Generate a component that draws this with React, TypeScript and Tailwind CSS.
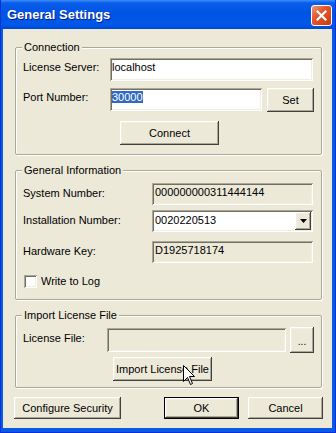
import React from "react";

const raised =
  "bg-[#ECE9D8] shadow-[inset_-1px_-1px_0_#404040,inset_1px_1px_0_#ffffff,inset_-2px_-2px_0_#ACA899,inset_2px_2px_0_#F1EFE2]";
const sunken =
  "shadow-[inset_1px_1px_0_#ACA899,inset_-1px_-1px_0_#ffffff,inset_2px_2px_0_#716F64,inset_-2px_-2px_0_#F1EFE2]";

function Group({
  title,
  className,
  children,
}: {
  title: string;
  className: string;
  children: React.ReactNode;
}) {
  return (
    <div
      className={`relative w-[307px] shrink-0 border border-[#ACA899] rounded-[2px] shadow-[inset_1px_1px_0_#ffffff,1px_1px_0_#ffffff] ${className}`}
    >
      <span className="absolute left-[6px] top-[-7px] px-[2px] bg-[#ECE9D8] leading-[13px] whitespace-nowrap">
        {title}
      </span>
      {children}
    </div>
  );
}

function Btn({
  children,
  className,
}: {
  children: React.ReactNode;
  className: string;
}) {
  return (
    <div
      className={`${raised} flex items-center justify-center shrink-0 leading-[13px] whitespace-nowrap ${className}`}
    >
      {children}
    </div>
  );
}

export default function App() {
  return (
    <div className="relative w-[336px] h-[433px] flex flex-col bg-[#0A5AE6] border-x border-b border-[#0831D9] font-['Liberation_Sans',Arial,sans-serif] text-[11px] leading-[13px] text-black overflow-hidden select-none">
      {/* Title bar */}
      <div className="h-[29px] shrink-0 -mx-px flex items-start justify-between pl-[7px] pr-[4px] bg-[linear-gradient(180deg,#3D8EF8_0%,#0A5EEB_10%,#0054E3_45%,#0058E9_85%,#0048D6_100%)]">
        <span className="mt-[7px] text-[13px] leading-[15px] font-bold text-white [text-shadow:1px_1px_0_#0A1E8C]">
          General Settings
        </span>
        <div className="mt-[5px] w-[21px] h-[21px] rounded-[3px] border border-white bg-[linear-gradient(135deg,#F09A78_0%,#E2562F_40%,#CC3A12_100%)] flex items-center justify-center">
          <svg width="11" height="11" viewBox="0 0 11 11">
            <path
              d="M1.5 1.5 L9.5 9.5 M9.5 1.5 L1.5 9.5"
              stroke="#ffffff"
              strokeWidth="2.2"
              strokeLinecap="square"
            />
          </svg>
        </div>
      </div>

      {/* Frame + client */}
      <div className="flex-1 flex pl-[2px] pr-[3px] pb-[4px]">
        <div className="flex-1 bg-[#ECE9D8] flex flex-col pl-[12px] pt-[18px]">
          {/* Connection */}
          <Group title="Connection" className="h-[108px] pt-[10px] pl-[7px]">
            <div className="flex items-start h-[23px]">
              <span className="w-[87px] mt-[3px]">License Server:</span>
              <div className={`w-[203px] h-[23px] bg-white ${sunken} pl-[2px] pt-[3px]`}>
                localhost
              </div>
            </div>
            <div className="flex items-start mt-[7px]">
              <span className="w-[87px] mt-[3px]">Port Number:</span>
              <div className={`w-[152px] h-[23px] bg-white ${sunken} pl-[2px] pt-[3px]`}>
                <span className="bg-[#316AC5] text-white">30000</span>
              </div>
              <Btn className="ml-[5px] w-[47px] h-[24px]">Set</Btn>
            </div>
            <Btn className="mt-[9px] ml-[97px] w-[99px] h-[24px]">Connect</Btn>
          </Group>

          {/* General Information */}
          <Group title="General Information" className="mt-[15px] h-[130px] pt-[12px] pl-[7px]">
            <div className="flex items-start h-[22px]">
              <span className="w-[129px] mt-[4px]">System Number:</span>
              <div className={`w-[161px] h-[22px] ${sunken} pl-[3px] pt-[3px]`}>
                000000000311444144
              </div>
            </div>
            <div className="flex items-start h-[22px] mt-[5px]">
              <span className="w-[129px] mt-[4px]">Installation Number:</span>
              <div className={`w-[161px] h-[22px] bg-white ${sunken} pl-[3px] pt-[2px] pr-[2px] flex items-start justify-between`}>
                <span className="mt-[2px]">0020220513</span>
                <div className={`${raised} w-[16px] h-[18px] flex items-center justify-center`}>
                  <svg width="7" height="4" viewBox="0 0 7 4">
                    <path d="M0 0 H7 L3.5 4 Z" fill="#000000" />
                  </svg>
                </div>
              </div>
            </div>
            <div className="flex items-start h-[22px] mt-[9px]">
              <span className="w-[129px] mt-[4px]">Hardware Key:</span>
              <div className={`w-[161px] h-[22px] ${sunken} pl-[3px] pt-[3px]`}>
                D1925718174
              </div>
            </div>
            <div className="flex items-center mt-[12px] ml-[1px]">
              <div className={`w-[13px] h-[13px] bg-white ${sunken}`} />
              <span className="ml-[4px]">Write to Log</span>
            </div>
          </Group>

          {/* Import License File */}
          <Group title="Import License File" className="mt-[15px] h-[73px] pt-[11px] pl-[7px]">
            <div className="flex items-start">
              <span className="w-[84px] mt-[5px]">License File:</span>
              <div className={`w-[179px] h-[24px] ${sunken} mt-[1px]`} />
              <Btn className="ml-[4px] w-[24px] h-[26px]">
                <span className="mt-[3px] text-[10px]">...</span>
              </Btn>
            </div>
            <Btn className="mt-[4px] ml-[90px] w-[99px] h-[24px]">Import License File</Btn>
          </Group>

          {/* Bottom buttons */}
          <div className="flex mt-[9px] -ml-px">
            <Btn className="w-[107px] h-[22px]">Configure Security</Btn>
            <div className="ml-[43px] w-[75px] h-[22px] border border-black flex">
              <Btn className="flex-1 h-full">OK</Btn>
            </div>
            <Btn className="ml-[9px] w-[75px] h-[22px]">Cancel</Btn>
          </div>
        </div>
      </div>

      {/* Mouse pointer */}
      <svg
        className="absolute left-[182px] top-[365px]"
        width="13"
        height="21"
        viewBox="0 0 13 21"
      >
        <path
          d="M0.5 0.5 L0.5 16.5 L4.5 12.5 L7.5 19.5 L9.5 18.5 L6.5 11.5 L11.5 11.5 Z"
          fill="#ffffff"
          stroke="#000000"
          strokeWidth="1"
        />
      </svg>
    </div>
  );
}
